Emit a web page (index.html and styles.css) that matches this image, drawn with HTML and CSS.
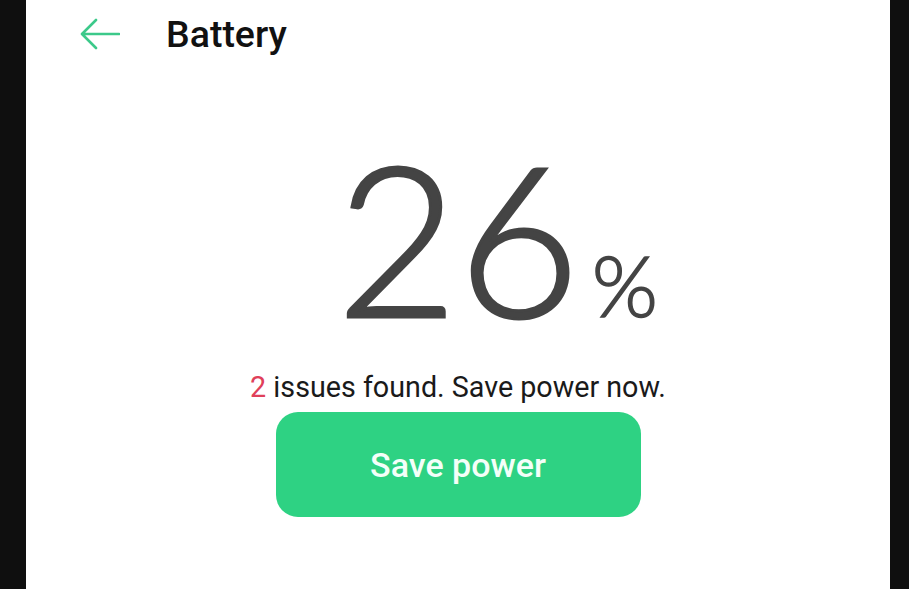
FILE: index.html
```html
<!DOCTYPE html>
<html>
<head>
<meta charset="utf-8">
<link rel="stylesheet" href="styles.css">
</head>
<body>
<div class="screen">
  <header class="top">
    <svg class="back" width="40" height="32" viewBox="0 0 40 32"><path d="M39 16H3M16 2L2 16l14 14" fill="none" stroke="#3cc98a" stroke-width="2.6" stroke-linecap="round" stroke-linejoin="round"/></svg>
    <h1 class="title">Battery</h1>
  </header>
  <main class="main">
    <div class="level"><span class="num">26<span class="pct">%</span></span></div>
    <p class="msg"><span class="count">2</span> issues found. Save power now.</p>
    <button class="save">Save power</button>
  </main>
</div>
</body>
</html>
```
FILE: styles.css
```css
html, body { margin: 0; padding: 0; }
body { background: #0f0f0f; height: 589px; overflow: hidden; font-family: Roboto, "Liberation Sans", sans-serif; }
.screen { margin-left: 26px; width: 864px; height: 589px; background: #fff; }
.top { display: flex; align-items: center; height: 68px; padding-left: 54px; }
.back { display: block; margin-right: 46px; }
.title { margin: 0; font-size: 37.5px; font-weight: 500; color: #111; letter-spacing: 0; }
.main { display: flex; flex-direction: column; align-items: center; }
.level { margin-top: 46px; height: 244px; line-height: 244px; white-space: nowrap; }
.num { font-family: Lato, sans-serif; font-weight: 300; font-size: 210px; color: #444; -webkit-text-stroke: 3px #444; }
.pct { display: inline-block; width: 0; margin-left: 12px; margin-right: -12px; font-size: 85px; -webkit-text-stroke: 1.5px #444; }
.msg { margin: 12px 0 0; font-size: 28.7px; color: #1a1a1a; }
.count { color: #e0405a; }
.save { margin-top: 8px; width: 365px; height: 105px; border: 0; border-radius: 22px; background: #2ed283; color: #f4fff9; font-family: Roboto, sans-serif; font-weight: 500; font-size: 34px; }
```
